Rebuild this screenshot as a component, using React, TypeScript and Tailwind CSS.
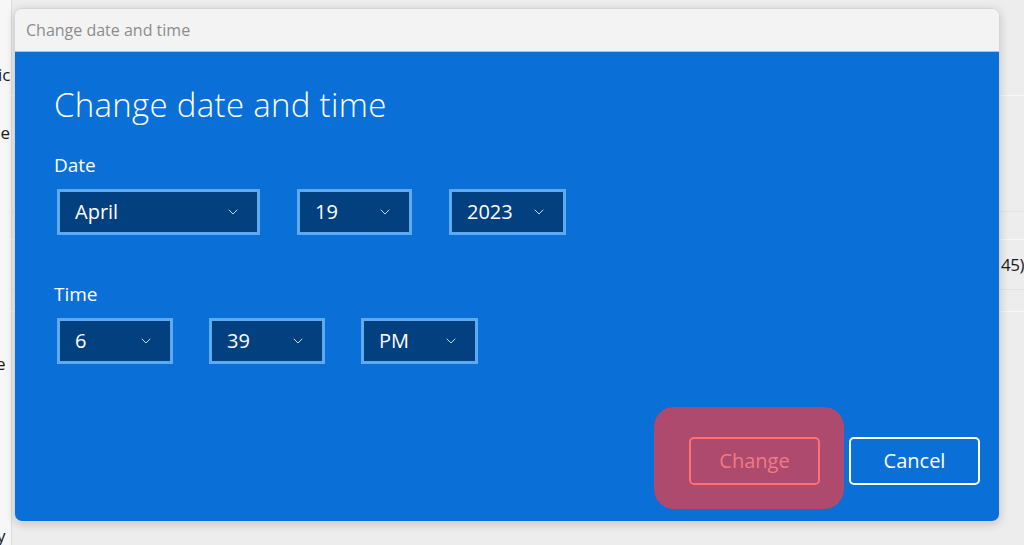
import { ChevronDown } from "lucide-react";

type DropProps = { value: string; width: string };

function Dropdown({ value, width }: DropProps) {
  return (
    <div
      className={`${width} h-[46px] flex items-center justify-between border-[3px] border-[#5eaaf0] bg-[#03407f] pl-[15px] pr-[16px]`}
    >
      <span className="text-[20px] text-white leading-none">{value}</span>
      <ChevronDown className="h-[16px] w-[16px] text-[#c2dcf7]" strokeWidth={1.5} />
    </div>
  );
}

export default function App() {
  return (
    <div
      className="relative w-[1024px] h-[545px] overflow-hidden bg-[#ededed] text-[#1a1a1a]"
      style={{ fontFamily: '"Open Sans", "Noto Sans", Arial, sans-serif' }}
    >
      {/* background app behind the dialog */}
      <div className="flex h-full">
        <div className="w-[12px] h-full bg-[#f7f7f7] border-r border-[#dcdcdc] text-[17px] whitespace-nowrap">
          <div className="pt-[62px] -ml-[2px]">ic</div>
          <div className="pt-[32px] -ml-[10px]">ne</div>
          <div className="pt-[206px] -ml-[4px]">e</div>
          <div className="pt-[146px] -ml-[3px]">y</div>
        </div>
        <div className="flex-1 flex flex-col">
          <div className="h-[96px] border-b border-[#f8f8f8]" />
          <div className="h-[116px] border-b border-[#e2e2e2]" />
          <div className="h-[28px] border-b border-[#f8f8f8]" />
          <div className="h-[50px] border-b border-[#e2e2e2] flex items-center justify-end text-[17px]">
            <span className="tracking-[-0.5px]">45)</span>
          </div>
          <div className="h-[22px] border-b border-[#f8f8f8]" />
          <div className="flex-1" />
        </div>
      </div>

      {/* dialog window */}
      <div className="absolute left-[14px] top-[8px] w-[986px] h-[514px] flex flex-col rounded-[8px] overflow-hidden shadow-[0_2px_10px_rgba(0,0,0,0.18)] border border-[#d6d6d6]">
        <div className="h-[43px] bg-[#f3f3f3] flex items-center pl-[11px] border-b border-[#9cc8f0]">
          <span className="text-[16px] text-[#8c8c8c]">Change date and time</span>
        </div>
        <div className="flex-1 bg-[#0a6fd6] flex flex-col pl-[39px] pr-[19px]">
          <h1 className="mt-[36px] text-[33px] font-light text-white leading-none tracking-[0.3px]">
            Change date and time
          </h1>
          <div className="mt-[35px] text-[19px] text-white leading-none">Date</div>
          <div className="mt-[14px] flex gap-[37px] pl-[3px]">
            <Dropdown value="April" width="w-[203px]" />
            <Dropdown value="19" width="w-[115px]" />
            <Dropdown value="2023" width="w-[117px]" />
          </div>
          <div className="mt-[50px] text-[19px] text-white leading-none">Time</div>
          <div className="mt-[14px] flex gap-[36px] pl-[3px]">
            <Dropdown value="6" width="w-[116px]" />
            <Dropdown value="39" width="w-[116px]" />
            <Dropdown value="PM" width="w-[117px]" />
          </div>
          <div className="mt-[43px] flex justify-end items-start gap-[5px]">
            <div className="w-[190px] h-[102px] rounded-[20px] bg-[#ad4a6d] flex items-start pt-[30px] pl-[35px]">
              <button className="w-[131px] h-[48px] rounded-[5px] border-[2px] border-[#ff6f73] text-[20px] text-[#f27a80]">
                Change
              </button>
            </div>
            <button className="mt-[30px] w-[131px] h-[48px] rounded-[5px] border-[2px] border-white text-[20px] text-white">
              Cancel
            </button>
          </div>
        </div>
      </div>
    </div>
  );
}
